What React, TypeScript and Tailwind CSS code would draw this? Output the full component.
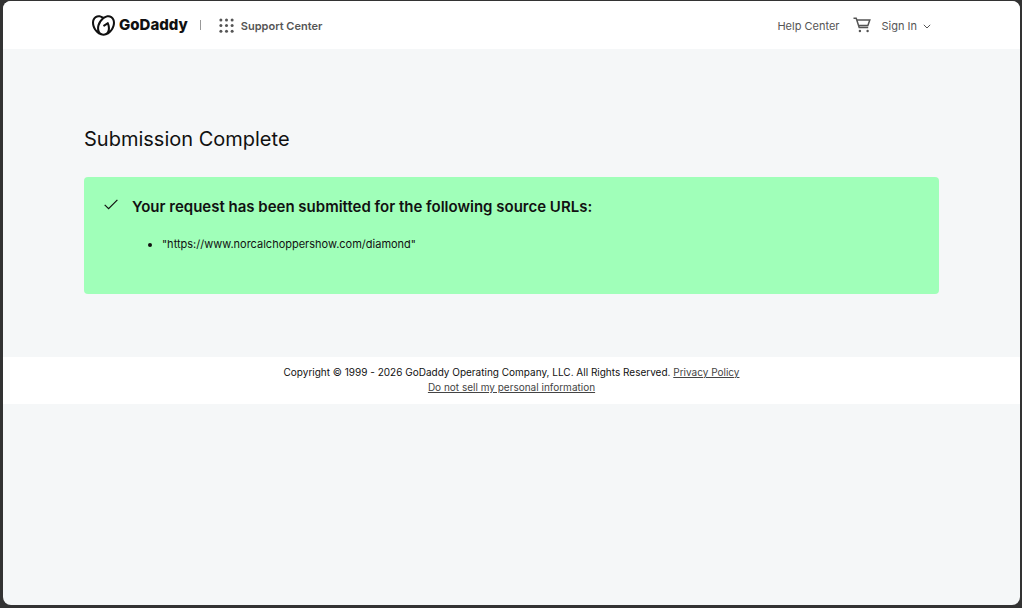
import { SiGodaddy } from 'react-icons/si';

const sourceUrls = ['"https://www.norcalchoppershow.com/diamond"'];

const dots = [2, 8, 14];

function GridIcon() {
  return (
    <svg width="15" height="15" viewBox="0 0 16 16" fill="currentColor" aria-hidden="true">
      {dots.map((cy) => dots.map((cx) => <circle key={`${cx}-${cy}`} cx={cx} cy={cy} r="1.6" />))}
    </svg>
  );
}

function CartIcon() {
  return (
    <svg width="18" height="16" viewBox="0 0 18 16" fill="none" stroke="currentColor" aria-hidden="true">
      <path d="M0.5 1.2H3.2L6.2 10.6H15.2M3.8 3H16.8L14.9 8.4H5.6" strokeWidth="1.5" />
      <circle cx="6.9" cy="14" r="1.2" fill="currentColor" stroke="none" />
      <circle cx="14.6" cy="14" r="1.2" fill="currentColor" stroke="none" />
    </svg>
  );
}

function ChevronIcon() {
  return (
    <svg width="8" height="5" viewBox="0 0 8 5" fill="none" stroke="currentColor" aria-hidden="true">
      <path d="M0.8 0.8L4 4L7.2 0.8" strokeWidth="1" />
    </svg>
  );
}

function CheckIcon() {
  return (
    <svg width="14" height="11" viewBox="0 0 14 11" fill="none" stroke="currentColor" aria-hidden="true">
      <path d="M0.7 5.8L4.6 9.7L13.4 0.8" strokeWidth="1.2" />
    </svg>
  );
}

function Header() {
  return (
    <header className="bg-white">
      <div className="mx-auto flex h-12 w-full max-w-[855px] items-center justify-between px-2 text-[#555]">
        <div className="flex items-center">
          <a href="#home" className="flex items-center gap-1 text-[#111]">
            <SiGodaddy className="size-[23px]" aria-hidden="true" />
            <span className="text-[15px] font-extrabold">GoDaddy</span>
          </a>
          <span className="ml-3 h-[10px] w-px bg-[#999]" />
          <a href="#support" className="ml-[18px] flex items-center gap-[7px]">
            <GridIcon />
            <span className="pt-0.5 text-[11px] font-semibold">Support Center</span>
          </a>
        </div>
        <nav className="flex items-center text-[11px]">
          <a href="#help" className="pt-0.5">
            Help Center
          </a>
          <a href="#cart" aria-label="Cart" className="ml-[14px]">
            <CartIcon />
          </a>
          <button type="button" className="ml-[10px] flex items-center gap-[6px] pt-0.5">
            Sign In
            <ChevronIcon />
          </button>
        </nav>
      </div>
    </header>
  );
}

function Footer() {
  return (
    <footer className="bg-white pt-2 pb-[9px] text-center text-[10px] leading-[15px] text-[#111]">
      <p>
        Copyright © 1999 - 2026 GoDaddy Operating Company, LLC. All Rights Reserved.{' '}
        <a href="#privacy" className="text-[#444] underline">
          Privacy Policy
        </a>
      </p>
      <p>
        <a href="#do-not-sell" className="text-[#444] underline">
          Do not sell my personal information
        </a>
      </p>
    </footer>
  );
}

export default function App() {
  return (
    <div className="flex min-h-screen bg-[#333] pt-px pr-[2px] pb-[3px] pl-[3px] font-['Inter',sans-serif]">
      <div className="flex-1 overflow-hidden rounded-lg bg-[#f5f7f8]">
        <Header />
        <main className="mx-auto w-full max-w-[855px] pt-[76px] pb-[63px] text-[#111]">
          <h1 className="text-xl leading-7">Submission Complete</h1>
          <section className="mt-6 flex min-h-[117px] gap-[14px] rounded bg-[#a0ffb9] px-5 pt-[18px] pb-9">
            <span className="pt-1">
              <CheckIcon />
            </span>
            <div>
              <h2 className="text-[15px] leading-6 font-semibold">
                Your request has been submitted for the following source URLs:
              </h2>
              <ul className="mt-4 list-disc pl-[30px] text-[11px] leading-[18px]">
                {sourceUrls.map((url) => (
                  <li key={url}>{url}</li>
                ))}
              </ul>
            </div>
          </section>
        </main>
        <Footer />
      </div>
    </div>
  );
}
